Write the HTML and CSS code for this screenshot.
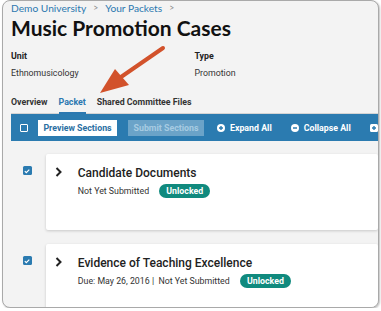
FILE: index.html
```html
<!DOCTYPE html>
<html lang="en">
<head>
    <meta charset="UTF-8">
    <title>Music Promotion Cases</title>
    <link rel="stylesheet" href="styles.css">
</head>
<body>
    <div class="frame">
        <div class="breadcrumb">
            <a>Demo University</a><span class="sep">&gt;</span><a>Your Packets</a><span class="sep">&gt;</span>
        </div>
        <h1 class="title">Music Promotion Cases</h1>

        <div class="meta">
            <div class="meta-col">
                <div class="meta-label">Unit</div>
                <div class="meta-value">Ethnomusicology</div>
            </div>
            <div class="meta-col">
                <div class="meta-label">Type</div>
                <div class="meta-value">Promotion</div>
            </div>
        </div>

        <div class="tabs">
            <div class="tab">Overview</div>
            <div class="tab active">Packet</div>
            <div class="tab">Shared Committee Files</div>
        </div>

        <div class="toolbar">
            <span class="box"></span>
            <button class="btn btn-white">Preview Sections</button>
            <button class="btn btn-disabled">Submit Sections</button>
            <span class="action">
                <svg width="8" height="8" viewBox="0 0 8 8"><circle cx="4" cy="4" r="4" fill="#fff"/><path d="M4 2v4M2 4h4" stroke="#2b7bb0" stroke-width="1.4"/></svg>
                Expand All
            </span>
            <span class="action">
                <svg width="8" height="8" viewBox="0 0 8 8"><circle cx="4" cy="4" r="4" fill="#fff"/><path d="M2 4h4" stroke="#2b7bb0" stroke-width="1.4"/></svg>
                Collapse All
            </span>
            <span class="action">
                <svg width="8" height="8" viewBox="0 0 8 8"><rect width="8" height="8" rx="1.5" fill="#fff"/><path d="M4 2v4M2 4h4" stroke="#2b7bb0" stroke-width="1.4"/></svg>
            </span>
        </div>

        <div class="sections">
            <div class="section">
                <span class="check"><svg width="8" height="8" viewBox="0 0 8 8"><path d="M1.8 4.2l1.5 1.5 3-3" fill="none" stroke="#fff" stroke-width="1.2"/></svg></span>
                <div class="card">
                    <svg class="chev" width="7" height="10" viewBox="0 0 7 10"><path d="M1.5 1l4 4-4 4" fill="none" stroke="#222" stroke-width="2"/></svg>
                    <div class="card-body">
                        <div class="card-title">Candidate Documents</div>
                        <div class="card-status">Not Yet Submitted <span class="badge">Unlocked</span></div>
                    </div>
                </div>
            </div>
            <div class="section">
                <span class="check"><svg width="8" height="8" viewBox="0 0 8 8"><path d="M1.8 4.2l1.5 1.5 3-3" fill="none" stroke="#fff" stroke-width="1.2"/></svg></span>
                <div class="card">
                    <svg class="chev" width="7" height="10" viewBox="0 0 7 10"><path d="M1.5 1l4 4-4 4" fill="none" stroke="#222" stroke-width="2"/></svg>
                    <div class="card-body">
                        <div class="card-title">Evidence of Teaching Excellence</div>
                        <div class="card-status">Due: May 26, 2016 |&nbsp; Not Yet Submitted <span class="badge">Unlocked</span></div>
                    </div>
                </div>
            </div>
        </div>

        <svg class="arrow" width="80" height="60" viewBox="0 0 80 60">
            <path d="M70 3 L28 32" stroke="#d2522b" stroke-width="4" stroke-linecap="round"/>
            <path d="M7 48 L22 24 L36 40 Z" fill="#d2522b"/>
        </svg>
    </div>
</body>
</html>
```

FILE: styles.css
```css
* {
    margin: 0;
    padding: 0;
    box-sizing: border-box;
}

body {
    background: #fff;
    font-family: Roboto, 'Liberation Sans', sans-serif;
    color: #333;
}

.frame {
    position: relative;
    margin-left: 2px;
    width: 377px;
    height: 308px;
    background: #f3f3f3;
    border: 1px solid #a9a9a9;
    border-radius: 8px;
    overflow: hidden;
    padding: 1px 0 0 8px;
    box-shadow: 1px 1px 2px rgba(0, 0, 0, 0.25);
}

.breadcrumb {
    font-family: Lato, 'Open Sans', sans-serif;
    font-size: 10.2px;
    line-height: 13px;
    color: #2b78b0;
    display: flex;
    gap: 7px;
    height: 13px;
    align-items: center;
}

.breadcrumb .sep {
    color: #888;
    font-size: 8.5px;
}

.title {
    font-family: Lato, 'Open Sans', sans-serif;
    font-weight: 700;
    font-size: 21px;
    color: #111;
    line-height: 25px;
    height: 25px;
}

.meta {
    display: flex;
    margin-top: 10px;
}

.meta-col {
    width: 204px;
}

.meta-label {
    font-weight: 700;
    font-size: 8.8px;
    color: #222;
    line-height: 12px;
}

.meta-value {
    font-size: 8.8px;
    line-height: 12px;
    margin-top: 5px;
    color: #333;
}

.tabs {
    display: flex;
    gap: 11px;
    margin-top: 17px;
    border-bottom: 1px solid #d4d4d4;
    height: 18px;
}

.tab {
    font-weight: 700;
    font-size: 8.8px;
    line-height: 12px;
    color: #333;
    height: 18px;
}

.tab.active {
    color: #2b78b0;
    border-bottom: 2px solid #2b78b0;
}

.toolbar {
    display: flex;
    align-items: center;
    width: 420px;
    height: 27px;
    background: #2b7bb0;
    padding-left: 9px;
}

.box {
    width: 8px;
    height: 8px;
    border: 1px solid #fff;
    border-radius: 1px;
    margin-right: 10px;
}

.btn {
    font-family: Roboto, sans-serif;
    font-weight: 700;
    font-size: 8.8px;
    height: 16px;
    border: none;
    white-space: nowrap;
    width: 79px;
    margin-right: 11px;
}

.btn-white {
    background: #fff;
    color: #2b6fa2;
}

.btn-disabled {
    background: #6ba3c8;
    color: #a7cbe2;
    width: 76px;
    margin-right: 13px;
}

.action {
    display: flex;
    align-items: center;
    gap: 5px;
    color: #fff;
    font-weight: 700;
    font-size: 8.8px;
    margin-right: 19px;
    white-space: nowrap;
}

.sections {
    display: flex;
    flex-direction: column;
    gap: 14px;
    margin-top: 13px;
}

.section {
    display: flex;
    align-items: flex-start;
}

.check {
    width: 9px;
    height: 9px;
    background: #2b7bb0;
    border-radius: 1.5px;
    margin: 12px 14px 0 12px;
    display: grid;
    place-items: center;
}

.card {
    display: flex;
    align-items: flex-start;
    width: 340px;
    height: 76px;
    background: #fff;
    border-radius: 2px;
    box-shadow: 0 1px 3px rgba(0, 0, 0, 0.18);
    padding: 12px 0 0 9px;
}

.chev {
    margin-top: 1px;
    margin-right: 16px;
}

.card-title {
    font-size: 12px;
    font-weight: 500;
    color: #222;
    line-height: 14px;
}

.card-status {
    margin-top: 4px;
    font-size: 8.8px;
    color: #333;
    display: flex;
    align-items: center;
    gap: 8px;
    white-space: pre;
}

.badge {
    background: #108a7e;
    color: #fff;
    font-weight: 700;
    font-size: 8.8px;
    border-radius: 8px;
    padding: 2px 7px;
    line-height: 10px;
}

.arrow {
    position: absolute;
    left: 90px;
    top: 44px;
}
```
